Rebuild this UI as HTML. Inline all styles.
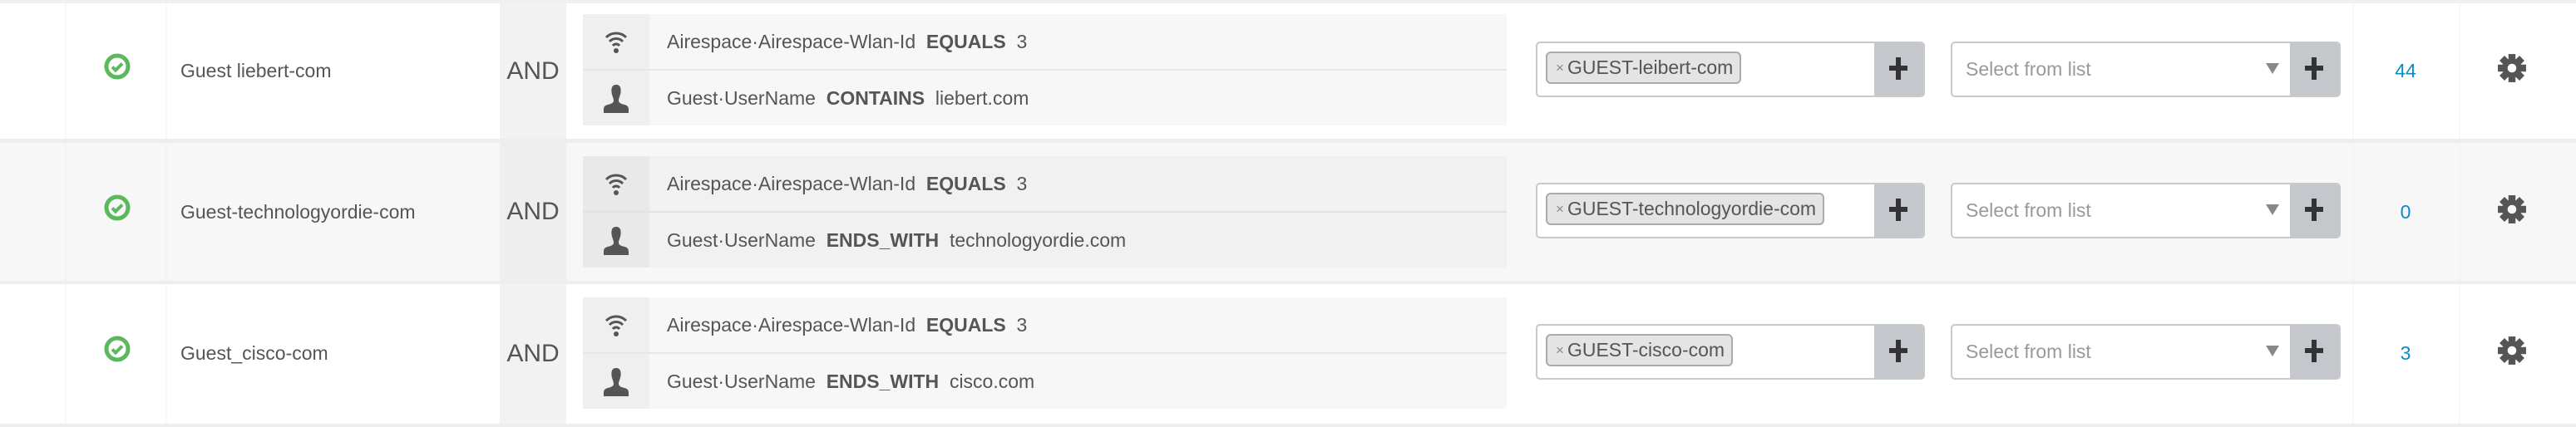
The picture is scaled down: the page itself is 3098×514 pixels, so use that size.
<!DOCTYPE html>
<html><head><meta charset="utf-8"><style>
*{margin:0;padding:0;box-sizing:border-box}
body{width:3098px;height:514px;background:#fff;position:relative;overflow:hidden;font-family:"Liberation Sans",sans-serif;color:#555}
.a{position:absolute}
.row{position:absolute;left:0;width:3098px;height:168px}
.vl{position:absolute;top:0;bottom:0;width:2px;background:#f8f8f8}
.name{position:absolute;left:217px;font-size:23px;line-height:30px}
.and{position:absolute;left:601px;width:80px;top:0;bottom:0;background:#f2f2f2;font-size:30px;line-height:168px;text-align:center}
.cond{position:absolute;left:701px;width:1111px;height:134px;background:#f7f7f7}
.ic{position:absolute;left:0;width:80px;height:66px;background:#efefef}
.ct{position:absolute;left:101px;font-size:23px;line-height:66px;color:#555}
.ct b{color:#555}
.div{position:absolute;left:0;right:0;top:66px;height:2px;background:#e6e6e6}
.box{position:absolute;height:67px;border:2px solid #c9c9c9;border-radius:5px;background:#fff;overflow:hidden}
.plus{position:absolute;right:0;top:0;bottom:0;width:59px;background:#c4c7cb}
.plus:before{content:"";position:absolute;left:26px;top:17px;width:6px;height:27px;background:#333}
.plus:after{content:"";position:absolute;left:18px;top:27px;width:22px;height:6px;background:#333}
.chip{position:absolute;left:10px;top:10px;height:39px;border:2px solid #aaa;border-radius:6px;background:#e4e4e4;font-size:23px;line-height:35px;padding:0 8px 0 10px;color:#555;white-space:nowrap}
.chip i{font-style:normal;font-size:17px;color:#888;margin-right:4px;position:relative;top:-2px}
.sel{position:absolute;left:16px;top:0;font-size:23px;line-height:62px;color:#999}
.tri{position:absolute;right:72px;top:24px;width:0;height:0;border-left:8px solid transparent;border-right:8px solid transparent;border-top:13px solid #888}
.num{position:absolute;left:2829px;width:128px;font-size:23px;text-align:center;color:#0a8ac8}
</style></head><body>

<div class="a" style="left:0;top:0;width:3098px;height:4px;background:#f0f0f0"></div>
<div class="a" style="left:0;top:167px;width:3098px;height:5px;background:#eeeeee"></div>
<div class="a" style="left:0;top:338px;width:3098px;height:4px;background:#eeeeee"></div>
<div class="a" style="left:0;top:510px;width:3098px;height:4px;background:#eeeeee"></div>

<div class="row" style="top:4px;height:163px;background:#fff"></div>
<div class="row" style="top:172px;height:166px;background:#f7f7f7"></div>
<div class="row" style="top:342px;height:168px;background:#fff"></div>

<div class="row" style="top:4px;height:163px">
 <div class="vl" style="left:78px"></div><div class="vl" style="left:199px"></div>
 <div class="vl" style="left:2829px"></div><div class="vl" style="left:2957px"></div>
 <svg class="a" style="left:125px;top:60px" width="32" height="32" viewBox="0 0 32 32"><circle cx="16" cy="16" r="13" fill="none" stroke="#5cb85c" stroke-width="5"/><path d="M10 16.5l4 4 8-8" fill="none" stroke="#5cb85c" stroke-width="4"/></svg>
 <div class="name" style="top:66px">Guest liebert-com</div>
 <div class="and" style="line-height:163px">AND</div>
 <div class="cond" style="top:13px">
  <div class="ic" style="top:0"></div><div class="ic" style="top:68px"></div>
  <svg class="a" style="left:26px;top:18px" width="28" height="30" viewBox="0 0 28 30"><path d="M2 10a17 17 0 0 1 24 0M6 15a11 11 0 0 1 16 0M10 20a5 5 0 0 1 8 0" fill="none" stroke="#555" stroke-width="3"/><circle cx="14" cy="26" r="3" fill="#555"/></svg>
  <svg class="a" style="left:24px;top:84px" width="32" height="36" viewBox="0 0 32 36"><path d="M16 1c5 0 6 4 5.5 9-.4 4-2.5 7-2.5 10 0 3 3 4 7 5s5 3 5 6v4H1v-4c0-3 1-5 5-6s7-2 7-5c0-3-2.1-6-2.5-10C10 5 11 1 16 1z" fill="#555"/></svg>
  <div class="ct" style="top:0">Airespace·Airespace-Wlan-Id&nbsp; <b>EQUALS</b>&nbsp; 3</div>
  <div class="div"></div>
  <div class="ct" style="top:68px">Guest·UserName&nbsp; <b>CONTAINS</b>&nbsp; liebert.com</div>
 </div>
 <div class="box" style="left:1847px;top:46px;width:468px"><div class="chip"><i>×</i>GUEST-leibert-com</div><div class="plus"></div></div>
 <div class="box" style="left:2346px;top:46px;width:469px"><div class="sel">Select from list</div><div class="tri"></div><div class="plus"></div></div>
 <div class="num" style="top:68px">44</div>
 <svg class="a" style="left:3003px;top:60px" width="36" height="36" viewBox="-17 -17 34 34"><g fill="#555"><circle r="11"/><rect x="-4" y="-16" width="8" height="32"/><rect x="-4" y="-16" width="8" height="32" transform="rotate(45)"/><rect x="-4" y="-16" width="8" height="32" transform="rotate(90)"/><rect x="-4" y="-16" width="8" height="32" transform="rotate(135)"/></g><circle r="5" fill="#fff"/></svg>
</div>

<div class="row" style="top:172px;height:166px">
 <div class="vl" style="left:78px;background:#f3f3f3"></div><div class="vl" style="left:199px;background:#f3f3f3"></div>
 <div class="vl" style="left:2829px;background:#f3f3f3"></div><div class="vl" style="left:2957px;background:#f3f3f3"></div>
 <svg class="a" style="left:125px;top:62px" width="32" height="32" viewBox="0 0 32 32"><circle cx="16" cy="16" r="13" fill="none" stroke="#5cb85c" stroke-width="5"/><path d="M10 16.5l4 4 8-8" fill="none" stroke="#5cb85c" stroke-width="4"/></svg>
 <div class="name" style="top:68px">Guest-technologyordie-com</div>
 <div class="and" style="line-height:166px;background:#eeeeee">AND</div>
 <div class="cond" style="top:16px;background:#f1f1f1">
  <div class="ic" style="top:0;background:#e9e9e9"></div><div class="ic" style="top:68px;background:#e9e9e9"></div>
  <svg class="a" style="left:26px;top:18px" width="28" height="30" viewBox="0 0 28 30"><path d="M2 10a17 17 0 0 1 24 0M6 15a11 11 0 0 1 16 0M10 20a5 5 0 0 1 8 0" fill="none" stroke="#555" stroke-width="3"/><circle cx="14" cy="26" r="3" fill="#555"/></svg>
  <svg class="a" style="left:24px;top:84px" width="32" height="36" viewBox="0 0 32 36"><path d="M16 1c5 0 6 4 5.5 9-.4 4-2.5 7-2.5 10 0 3 3 4 7 5s5 3 5 6v4H1v-4c0-3 1-5 5-6s7-2 7-5c0-3-2.1-6-2.5-10C10 5 11 1 16 1z" fill="#555"/></svg>
  <div class="ct" style="top:0">Airespace·Airespace-Wlan-Id&nbsp; <b>EQUALS</b>&nbsp; 3</div>
  <div class="div" style="background:#e2e2e2"></div>
  <div class="ct" style="top:68px">Guest·UserName&nbsp; <b>ENDS_WITH</b>&nbsp; technologyordie.com</div>
 </div>
 <div class="box" style="left:1847px;top:48px;width:468px"><div class="chip"><i>×</i>GUEST-technologyordie-com</div><div class="plus"></div></div>
 <div class="box" style="left:2346px;top:48px;width:469px"><div class="sel">Select from list</div><div class="tri"></div><div class="plus"></div></div>
 <div class="num" style="top:70px">0</div>
 <svg class="a" style="left:3003px;top:62px" width="36" height="36" viewBox="-17 -17 34 34"><g fill="#555"><circle r="11"/><rect x="-4" y="-16" width="8" height="32"/><rect x="-4" y="-16" width="8" height="32" transform="rotate(45)"/><rect x="-4" y="-16" width="8" height="32" transform="rotate(90)"/><rect x="-4" y="-16" width="8" height="32" transform="rotate(135)"/></g><circle r="5" fill="#f7f7f7"/></svg>
</div>

<div class="row" style="top:342px;height:168px">
 <div class="vl" style="left:78px"></div><div class="vl" style="left:199px"></div>
 <div class="vl" style="left:2829px"></div><div class="vl" style="left:2957px"></div>
 <svg class="a" style="left:125px;top:62px" width="32" height="32" viewBox="0 0 32 32"><circle cx="16" cy="16" r="13" fill="none" stroke="#5cb85c" stroke-width="5"/><path d="M10 16.5l4 4 8-8" fill="none" stroke="#5cb85c" stroke-width="4"/></svg>
 <div class="name" style="top:68px">Guest_cisco-com</div>
 <div class="and">AND</div>
 <div class="cond" style="top:16px">
  <div class="ic" style="top:0"></div><div class="ic" style="top:68px"></div>
  <svg class="a" style="left:26px;top:18px" width="28" height="30" viewBox="0 0 28 30"><path d="M2 10a17 17 0 0 1 24 0M6 15a11 11 0 0 1 16 0M10 20a5 5 0 0 1 8 0" fill="none" stroke="#555" stroke-width="3"/><circle cx="14" cy="26" r="3" fill="#555"/></svg>
  <svg class="a" style="left:24px;top:84px" width="32" height="36" viewBox="0 0 32 36"><path d="M16 1c5 0 6 4 5.5 9-.4 4-2.5 7-2.5 10 0 3 3 4 7 5s5 3 5 6v4H1v-4c0-3 1-5 5-6s7-2 7-5c0-3-2.1-6-2.5-10C10 5 11 1 16 1z" fill="#555"/></svg>
  <div class="ct" style="top:0">Airespace·Airespace-Wlan-Id&nbsp; <b>EQUALS</b>&nbsp; 3</div>
  <div class="div"></div>
  <div class="ct" style="top:68px">Guest·UserName&nbsp; <b>ENDS_WITH</b>&nbsp; cisco.com</div>
 </div>
 <div class="box" style="left:1847px;top:48px;width:468px"><div class="chip"><i>×</i>GUEST-cisco-com</div><div class="plus"></div></div>
 <div class="box" style="left:2346px;top:48px;width:469px"><div class="sel">Select from list</div><div class="tri"></div><div class="plus"></div></div>
 <div class="num" style="top:70px">3</div>
 <svg class="a" style="left:3003px;top:62px" width="36" height="36" viewBox="-17 -17 34 34"><g fill="#555"><circle r="11"/><rect x="-4" y="-16" width="8" height="32"/><rect x="-4" y="-16" width="8" height="32" transform="rotate(45)"/><rect x="-4" y="-16" width="8" height="32" transform="rotate(90)"/><rect x="-4" y="-16" width="8" height="32" transform="rotate(135)"/></g><circle r="5" fill="#fff"/></svg>
</div>
</body></html>
